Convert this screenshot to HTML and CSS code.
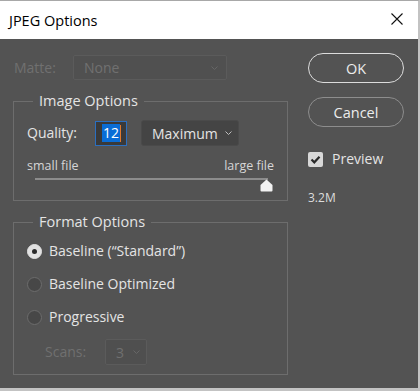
FILE: index.html
```html
<!DOCTYPE html>
<html>
<head>
<meta charset="utf-8">
<link rel="stylesheet" href="styles.css">
</head>
<body>
<div class="window">
  <div class="titlebar">
    <span class="title">JPEG Options</span>
    <svg class="close" width="12" height="12" viewBox="0 0 12 12"><path d="M0.5 0.5 L11.5 11.5 M11.5 0.5 L0.5 11.5" stroke="#111" stroke-width="1.1" fill="none"/></svg>
  </div>
  <div class="content">
    <div class="left">
      <div class="matte-row">
        <span class="label disabled">Matte:</span>
        <div class="select matte-select disabled">
          <span>None</span>
          <svg class="chev" width="7" height="4" viewBox="0 0 7 4"><path d="M0.5 0.5 L3.5 3.5 L6.5 0.5" stroke="#666" fill="none"/></svg>
        </div>
      </div>
      <fieldset class="group image-group">
        <legend>Image Options</legend>
        <div class="quality-row">
          <span class="label">Quality:</span>
          <div class="num-input"><span class="sel">12</span><span class="caret"></span></div>
          <div class="select quality-select">
            <span>Maximum</span>
            <svg class="chev" width="7" height="4" viewBox="0 0 7 4"><path d="M0.5 0.5 L3.5 3.5 L6.5 0.5" stroke="#bdbdbd" fill="none"/></svg>
          </div>
        </div>
        <div class="size-labels"><span>small file</span><span>large file</span></div>
        <div class="slider">
          <div class="track"></div>
          <svg class="thumb" width="13" height="13" viewBox="0 0 13 13"><path d="M6.5 0.5 L12.5 6 L12.5 11.5 Q12.5 12.5 11.5 12.5 L1.5 12.5 Q0.5 12.5 0.5 11.5 L0.5 6 Z" fill="#f2f2f2"/></svg>
        </div>
      </fieldset>
      <fieldset class="group format-group">
        <legend>Format Options</legend>
        <div class="radio-row first"><span class="radio on"></span><span class="label">Baseline (“Standard”)</span></div>
        <div class="radio-row"><span class="radio"></span><span class="label">Baseline Optimized</span></div>
        <div class="radio-row"><span class="radio"></span><span class="label">Progressive</span></div>
        <div class="scans-row">
          <span class="label disabled">Scans:</span>
          <div class="select scans-select disabled">
            <span>3</span>
            <svg class="chev" width="7" height="4" viewBox="0 0 7 4"><path d="M0.5 0.5 L3.5 3.5 L6.5 0.5" stroke="#666" fill="none"/></svg>
          </div>
        </div>
      </fieldset>
    </div>
    <div class="right">
      <button class="btn primary">OK</button>
      <button class="btn">Cancel</button>
      <div class="check-row">
        <span class="checkbox"><svg width="15" height="15" viewBox="0 0 15 15"><path d="M3.5 7.5 L6.3 10.3 L11.5 4.8" stroke="#2a2a2a" stroke-width="2.2" fill="none"/></svg></span>
        <span class="label">Preview</span>
      </div>
      <div class="size">3.2M</div>
    </div>
  </div>
</div>
</body>
</html>
```

FILE: styles.css
```css
* { box-sizing: border-box; }
html, body { margin: 0; padding: 0; }
body {
  font-family: "Open Sans", "Liberation Sans", sans-serif;
  background: #535353;
}
.window {
  width: 420px;
  height: 391px;
  display: flex;
  flex-direction: column;
  background: #535353;
  border-top: 1px solid #a8a8a8;
  border-right: 2px solid #c3c3c3;
  border-bottom: 3px solid #c3c3c3;
  overflow: hidden;
}
.titlebar {
  height: 38px;
  flex: none;
  background: #fff;
  display: flex;
  align-items: center;
  justify-content: space-between;
  padding: 0 15px 0 9px;
}
.title {
  font-size: 14.5px;
  color: #000;
}
.close { display: block; margin-top: -2px; }
.content {
  display: flex;
  padding-left: 13px;
}
.left {
  width: 275px;
  flex: none;
}
.label {
  font-size: 14px;
  color: #e4e4e4;
  line-height: 20px;
}
.label.disabled, .disabled { color: #707070; }
.matte-row {
  margin-top: 16px;
  display: flex;
  align-items: center;
  height: 25px;
}
.matte-row .label { margin-left: 1px; width: 59px; }
.select {
  display: flex;
  align-items: center;
  justify-content: space-between;
  border-radius: 2px;
  font-size: 14px;
}
.matte-select {
  width: 154px;
  height: 25px;
  background: #505050;
  border: 1px solid #5b5b5b;
  padding: 0 8px 0 10px;
}
.group {
  margin: 11px 0 0 0;
  border: 1px solid #6d6d6d;
  padding: 0 0 0 13px;
  min-width: 0;
}
.group legend {
  font-size: 14.5px;
  color: #e4e4e4;
  line-height: 20px;
  padding: 0 6px;
  margin-left: 6px;
}
.image-group { padding-bottom: 8px; }
.quality-row {
  margin-top: 9px;
  display: flex;
  align-items: center;
  height: 26px;
}
.quality-row .label { width: 68px; }
.num-input {
  width: 32px;
  height: 25px;
  border: 1px solid #2b6fc0;
  background: #3a3a3a;
  display: flex;
  align-items: center;
  padding-left: 6px;
}
.num-input .sel {
  background: #0a6dd6;
  color: #fff;
  font-size: 14px;
  line-height: 18px;
  padding: 0 1px;
}
.num-input .caret {
  width: 1px;
  height: 17px;
  background: #e0782c;
}
.quality-select {
  margin-left: 14px;
  width: 98px;
  height: 26px;
  background: #444444;
  border: 1px solid #4a4a4a;
  border-radius: 3px;
  color: #e4e4e4;
  padding: 0 6px 0 10px;
}
.size-labels {
  margin-top: 12px;
  display: flex;
  justify-content: space-between;
  font-size: 12.5px;
  line-height: 16px;
  color: #d6d6d6;
  padding-right: 13px;
}
.slider {
  position: relative;
  margin-top: 0;
  height: 14px;
}
.track {
  margin: 4px 0 0 8px;
  width: 233px;
  height: 2px;
  background: #8c8c8c;
}
.thumb {
  position: absolute;
  left: 233px;
  top: 1px;
}
.format-group { padding-bottom: 9px; margin-top: 11px; }
.radio-row {
  display: flex;
  align-items: center;
  height: 24px;
  margin-top: 9px;
}
.radio-row.first { margin-top: 7px; }
.radio {
  width: 15px;
  height: 15px;
  border-radius: 50%;
  background: #474747;
  border: 1px solid #6c6c6c;
  margin-right: 7px;
  display: flex;
  align-items: center;
  justify-content: center;
}
.radio.on {
  background: #e2e2e2;
  border-color: #e2e2e2;
}
.radio.on::after {
  content: "";
  width: 5px;
  height: 5px;
  border-radius: 50%;
  background: #2b2b2b;
}
.scans-row {
  margin-top: 10px;
  margin-left: 18px;
  display: flex;
  align-items: center;
  height: 26px;
}
.scans-row .label { width: 60px; }
.scans-select {
  width: 42px;
  height: 26px;
  background: #4f4f4f;
  border: 1px solid #5b5b5b;
  padding: 0 6px 0 10px;
}
.right {
  margin-left: 20px;
  width: 96px;
  flex: none;
  display: flex;
  flex-direction: column;
}
.btn {
  font-family: inherit;
  height: 30px;
  width: 96px;
  border-radius: 15px;
  background: transparent;
  border: 1.5px solid #8d8d8d;
  color: #ececec;
  font-size: 14.5px;
  margin-top: 14px;
  padding: 0;
}
.btn.primary { border-color: #dcdcdc; }
.check-row {
  margin-top: 24px;
  display: flex;
  align-items: center;
  height: 16px;
}
.checkbox {
  width: 15px;
  height: 15px;
  border-radius: 2px;
  background: #d8d8d8;
  margin-right: 9px;
  display: block;
}
.checkbox svg { display: block; }
.size {
  margin-top: 23px;
  font-size: 12px;
  line-height: 16px;
  color: #dcdcdc;
}
```
